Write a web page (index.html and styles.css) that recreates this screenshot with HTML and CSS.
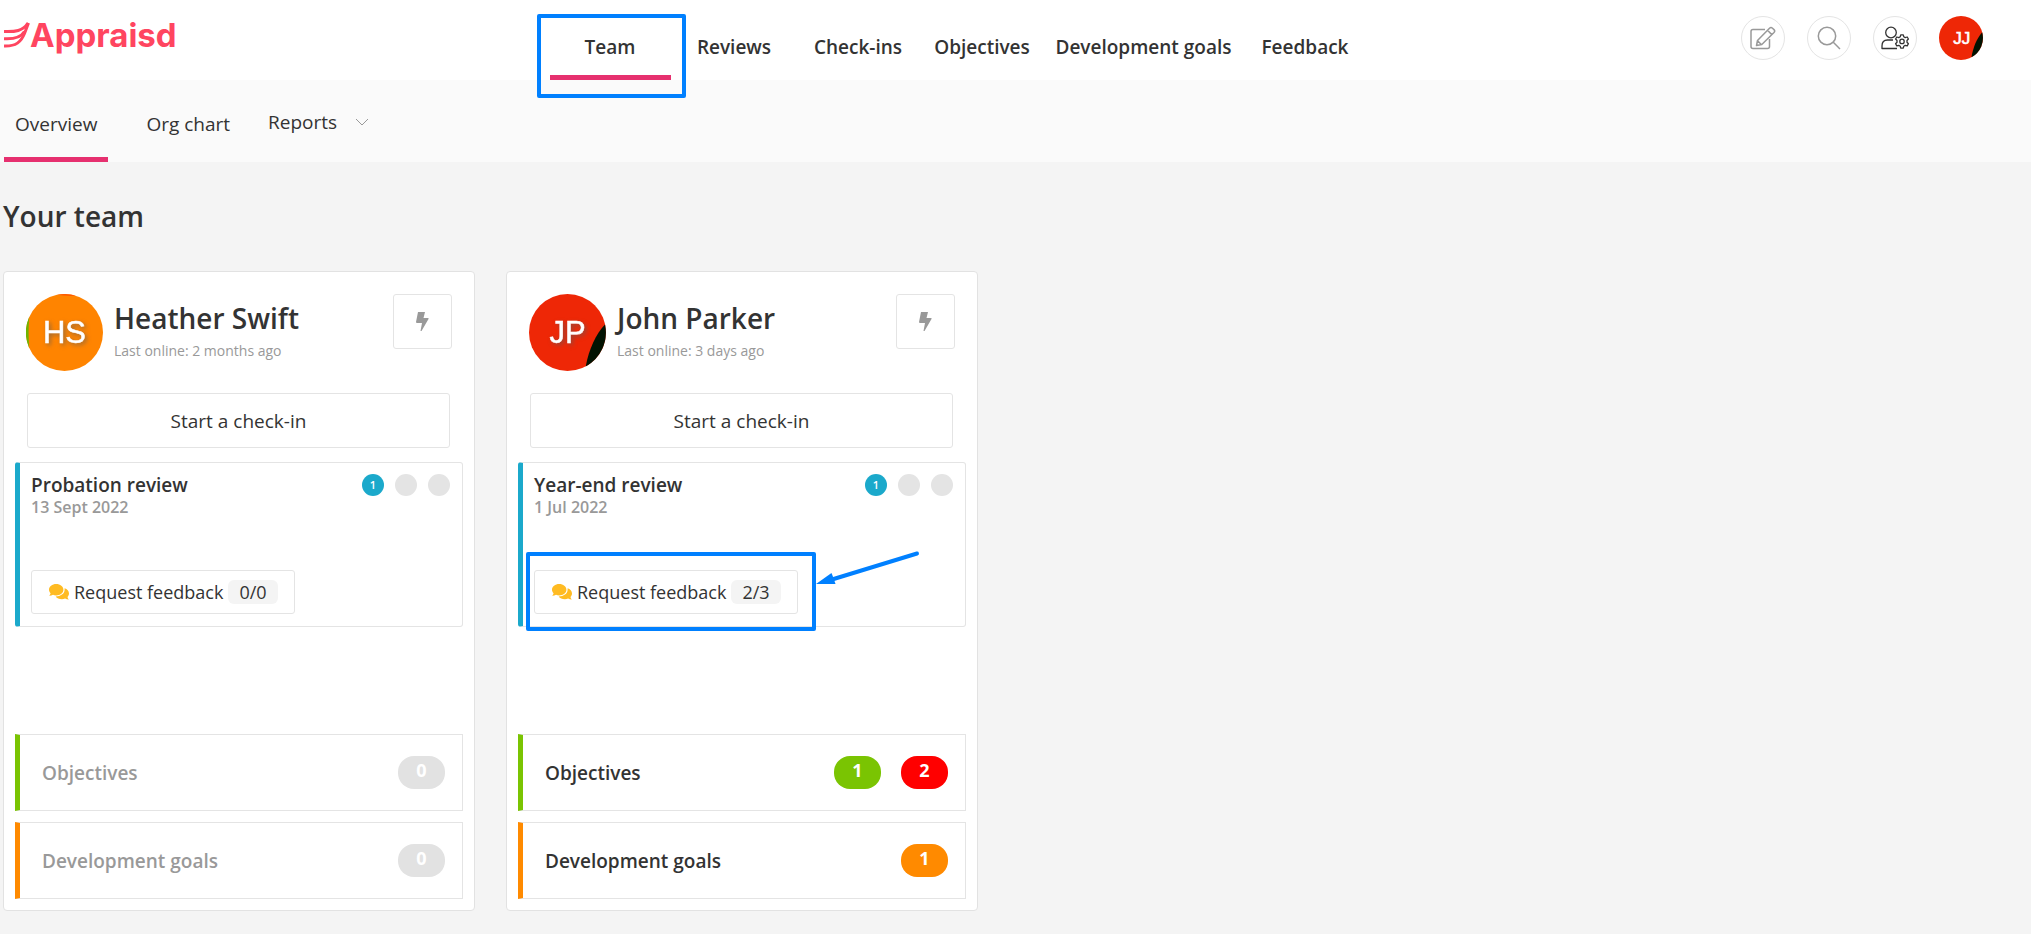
FILE: index.html
```html
<!DOCTYPE html>
<html lang="en">
<head>
  <meta charset="UTF-8">
  <title>Your team - Appraisd</title>
  <meta name="viewport" content="width=device-width, initial-scale=1.0">
  <link rel="stylesheet" href="styles.css">
</head>
<body>

  <!-- ====== Header ====== -->
  <header class="header">
    <a class="logo" href="#">
      <svg class="logo-wing" viewBox="0 0 26 26" aria-hidden="true">
        <path d="M0 9.500C11 10 19 9 24 1"/>
        <path d="M0 16.700C9 17.200 17 15.500 20.500 9.500"/>
        <path d="M0 24C12 24.500 17 20 20.500 11.500L24.500 1"/>
      </svg>
      <span>Appraisd</span>
    </a>

    <nav class="main-nav">
      <a class="nav-link active" href="#team">Team<span class="highlight highlight-nav"></span></a>
      <a class="nav-link" href="#reviews">Reviews</a>
      <a class="nav-link" href="#checkins">Check-ins</a>
      <a class="nav-link" href="#objectives">Objectives</a>
      <a class="nav-link" href="#goals">Development goals</a>
      <a class="nav-link" href="#feedback">Feedback</a>
    </nav>

    <div class="actions">
      <button class="icon-btn" type="button" aria-label="Write">
        <svg width="26" height="24" viewBox="0 0 26 24">
          <path d="M15 3.500H3Q1 3.500 1 5.500V20.500Q1 22.500 3 22.500H17.500Q19.500 22.500 19.500 20.500V13"/>
          <path d="M6.500 19.500L7.500 14.500L19.500 2.200Q21 .8 22.500 2.200L24 3.600Q25.400 5 24 6.500L11.800 18.500ZM17.500 4.300L21.800 8.600M7.800 15L11.300 18.500"/>
        </svg>
      </button>
      <button class="icon-btn" type="button" aria-label="Search">
        <svg width="24" height="24" viewBox="0 0 24 24">
          <circle cx="10" cy="10" r="8.700"/>
          <path d="M16.300 16.300L23 23"/>
        </svg>
      </button>
      <button class="icon-btn dark" type="button" aria-label="Admin">
        <svg width="28" height="24" viewBox="0 0 28 24">
          <circle cx="10" cy="6.500" r="5.300"/>
          <path d="M16 22.500H1V20Q1 14 6.500 14H12"/>
          <path d="M19.700 8.800H22.300L22.800 10.800L24.200 11.600L26.200 11L27.400 13L26 14.500V16.300L27.400 17.800L26.200 19.900L24.200 19.300L22.800 20.200L22.300 22.200H19.700L19.200 20.200L17.800 19.300L15.800 19.900L14.600 17.800L16 16.300V14.500L14.600 13L15.800 11L17.800 11.600L19.200 10.800Z"/>
          <circle cx="21" cy="15.400" r="2.200"/>
        </svg>
      </button>
      <svg class="avatar-small" viewBox="0 0 77 77" role="img" aria-label="JJ">
        <circle cx="38.500" cy="38.500" r="38.500" fill="#ee2706"/>
        <path d="M75.500 28.500A38.500 38.500 0 0 1 56.700 72.400C60 54 66 40 75.500 28.500Z" fill="#021302"/>
        <text x="40" y="49" font-size="30">JJ</text>
      </svg>
    </div>
  </header>

  <!-- ====== Sub navigation ====== -->
  <nav class="sub-nav">
    <a class="sub-link active" href="#overview">Overview</a>
    <a class="sub-link" href="#org">Org chart</a>
    <button class="sub-menu" type="button">Reports
      <svg width="14" height="8" viewBox="0 0 14 8"><path d="M1 1L7 7L13 1"/></svg>
    </button>
  </nav>

  <!-- ====== Team ====== -->
  <main class="content">
    <h1>Your team</h1>

    <div class="cards">
      <article class="card">
        <div class="person">
          <svg class="avatar" viewBox="0 0 77 77" role="img" aria-label="HS">
            <circle cx="38.500" cy="38.500" r="38.500" fill="#ff8400"/>
            <path d="M3.200 23A38.500 38.500 0 0 0 3.200 54Q2 38 3.200 23Z" fill="#6fb400"/>
            <path d="M31 .8A38.500 38.500 0 0 1 50 1.700Q40 2.500 31 .8Z" fill="#ff5a00"/>
            <text x="38.500" y="49">HS</text>
          </svg>
          <div class="person-text">
            <h2>Heather Swift</h2>
            <p>Last online: 2 months ago</p>
          </div>
          <button class="quick-btn" type="button" aria-label="Quick actions">
            <svg width="13" height="19" viewBox="0 0 13 19"><path d="M2 0H9L7.500 6H12Q13 6 12.500 7L5.500 19H4.500L6 11H1Q0 11 0 10Z"/></svg>
          </button>
        </div>

        <button class="checkin-btn" type="button">Start a check-in</button>

        <section class="review">
          <div class="review-top">
            <div>
              <h3>Probation review</h3>
              <p>13 Sept 2022</p>
            </div>
            <div class="steps">
              <span class="step current">1</span>
              <span class="step"></span>
              <span class="step"></span>
            </div>
          </div>
          <div class="feedback">
            <button class="feedback-btn" type="button">
              <svg width="20" height="16" viewBox="0 0 20 16"><path d="M7.200 0C11.200 0 14.400 2.500 14.400 5.700S11.200 11.400 7.200 11.400C6 11.400 4.900 11.200 4 10.800C3 11.400 1.700 11.800.2 11.800C.9 11 1.400 10.100 1.600 9.200C.6 8.200 0 7 0 5.700C0 2.500 3.200 0 7.200 0Z"/><path d="M15.600 4.300C18.200 5.200 20 7.200 20 9.500C20 10.800 19.400 12 18.500 12.900C18.700 13.900 19.200 14.800 19.900 15.600C18.400 15.600 17.100 15.200 16.100 14.600C15.100 15 14 15.200 12.900 15.200C10.200 15.200 7.800 14.100 6.700 12.400C11.500 12.300 15.600 9.800 15.600 5.700Z"/></svg>
              Request feedback
              <span class="count">0/0</span>
            </button>
          </div>
        </section>

        <section class="row row-objectives muted">
          <h3>Objectives</h3>
          <span class="pill">0</span>
        </section>
        <section class="row row-goals muted">
          <h3>Development goals</h3>
          <span class="pill">0</span>
        </section>
      </article>

      <article class="card">
        <div class="person">
          <svg class="avatar" viewBox="0 0 77 77" role="img" aria-label="JP">
            <circle cx="38.500" cy="38.500" r="38.500" fill="#ee2706"/>
            <path d="M76 30.500A38.500 38.500 0 0 1 56.700 72.400C60 55 67 40 76 30.500Z" fill="#021302"/>
            <text x="38.500" y="49">JP</text>
          </svg>
          <div class="person-text">
            <h2>John Parker</h2>
            <p>Last online: 3 days ago</p>
          </div>
          <button class="quick-btn" type="button" aria-label="Quick actions">
            <svg width="13" height="19" viewBox="0 0 13 19"><path d="M2 0H9L7.500 6H12Q13 6 12.500 7L5.500 19H4.500L6 11H1Q0 11 0 10Z"/></svg>
          </button>
        </div>

        <button class="checkin-btn" type="button">Start a check-in</button>

        <section class="review">
          <div class="review-top">
            <div>
              <h3>Year-end review</h3>
              <p>1 Jul 2022</p>
            </div>
            <div class="steps">
              <span class="step current">1</span>
              <span class="step"></span>
              <span class="step"></span>
            </div>
          </div>
          <div class="feedback">
            <button class="feedback-btn" type="button">
              <svg width="20" height="16" viewBox="0 0 20 16"><path d="M7.200 0C11.200 0 14.400 2.500 14.400 5.700S11.200 11.400 7.200 11.400C6 11.400 4.900 11.200 4 10.800C3 11.400 1.700 11.800.2 11.800C.9 11 1.400 10.100 1.600 9.200C.6 8.200 0 7 0 5.700C0 2.500 3.200 0 7.200 0Z"/><path d="M15.600 4.300C18.200 5.200 20 7.200 20 9.500C20 10.800 19.400 12 18.500 12.900C18.700 13.900 19.200 14.800 19.900 15.600C18.400 15.600 17.100 15.200 16.100 14.600C15.100 15 14 15.200 12.900 15.200C10.200 15.200 7.800 14.100 6.700 12.400C11.500 12.300 15.600 9.800 15.600 5.700Z"/></svg>
              Request feedback
              <span class="count">2/3</span>
            </button>
            <span class="highlight highlight-feedback"></span>
            <svg class="arrow" width="104" height="36" viewBox="0 0 104 36" aria-hidden="true">
              <path class="arrow-line" d="M16 29.500L101 3.500"/>
              <path class="arrow-head" d="M0 34L15.500 23L17.500 28L19.500 34Z"/>
            </svg>
          </div>
        </section>

        <section class="row row-objectives">
          <h3>Objectives</h3>
          <span class="pill green">1</span>
          <span class="pill red">2</span>
        </section>
        <section class="row row-goals">
          <h3>Development goals</h3>
          <span class="pill orange">1</span>
        </section>
      </article>
    </div>
  </main>

</body>
</html>
```
FILE: styles.css
```css
/* ====== General Styles ====== */
* {
  box-sizing: border-box;
}

body {
  font-family: "Open Sans", "Noto Sans", sans-serif;
  font-size: 19px;
  margin: 0;
  background: #f4f4f4;
  color: #333;
}

h1, h2, h3, p {
  margin: 0;
}

h1, h2 {
  font-size: 28px;
  line-height: 38px;
  font-weight: 600;
}

h3 {
  font-size: 19px;
  line-height: 22px;
  font-weight: 600;
}

a {
  color: inherit;
  text-decoration: none;
}

button {
  font: inherit;
  color: inherit;
  background: #fff;
  border: 1px solid #e4e4e4;
  border-radius: 3px;
  padding: 0;
  cursor: pointer;
}

/* ====== Header ====== */
.header {
  display: flex;
  justify-content: space-between;
  align-items: flex-start;
  height: 80px;
  padding: 0 48px 0 4px;
  background: #fff;
}

.logo {
  display: flex;
  width: 170px;
  padding-top: 15px;
  font-family: Inter, sans-serif;
  font-size: 33px;
  line-height: 40px;
  font-weight: 700;
  color: #ff4560;
}

.logo-wing {
  flex: none;
  width: 26px;
  height: 26px;
  margin-top: 7px;
  fill: none;
  stroke: #ff4560;
  stroke-width: 3;
}

.main-nav {
  display: flex;
  gap: 3px;
}

.nav-link {
  position: relative;
  min-width: 121px;
  height: 80px;
  padding: 34px 10px 0;
  line-height: 26px;
  font-weight: 600;
  text-align: center;
  border-bottom: 5px solid transparent;
}

.nav-link.active,
.sub-link.active {
  border-bottom-color: #e6306f;
}

.actions {
  display: flex;
  gap: 22px;
  padding-top: 16px;
}

.icon-btn {
  display: flex;
  align-items: center;
  justify-content: center;
  width: 44px;
  height: 44px;
  border-radius: 50%;
}

.icon-btn svg {
  fill: none;
  stroke: #999;
  stroke-width: 1.5;
  stroke-linejoin: round;
}

.icon-btn.dark svg {
  stroke: #333;
  stroke-width: 1.3;
}

.avatar,
.avatar-small {
  flex: none;
  width: 77px;
  height: 77px;
  font-family: "Liberation Sans", Arial, sans-serif;
  font-size: 31px;
  text-anchor: middle;
  fill: #fff;
  stroke-width: 0;
}

.avatar text {
  stroke: #fff;
  stroke-width: 0.5;
  filter: drop-shadow(2px 2px 2px rgba(90, 90, 90, 0.6));
}

.avatar-small {
  width: 44px;
  height: 44px;
}

.avatar-small text {
  stroke: #fff;
  stroke-width: 1;
}

/* ====== Sub navigation ====== */
.sub-nav {
  display: flex;
  gap: 27px;
  height: 82px;
  padding-left: 4px;
  background: #fafafa;
}

.sub-link {
  padding: 31px 11px 0;
  line-height: 26px;
  border-bottom: 5px solid transparent;
}

.sub-menu {
  display: flex;
  align-items: center;
  gap: 18px;
  height: 26px;
  margin-top: 29px;
  border: none;
  background: none;
}

.sub-menu svg {
  fill: none;
  stroke: #999;
}

/* ====== Team cards ====== */
.content {
  padding: 35px 3px 23px;
}

.cards {
  display: flex;
  flex-wrap: wrap;
  gap: 31px;
  margin-top: 36px;
}

.card {
  display: flex;
  flex-direction: column;
  width: 472px;
  min-height: 640px;
  padding: 11px;
  background: #fff;
  border: 1px solid #e2e2e2;
  border-radius: 4px;
}

.person {
  display: flex;
  align-items: flex-start;
  gap: 11px;
  padding: 11px 11px 0;
}

.person-text {
  flex: 1;
  padding-top: 5px;
}

.person-text p {
  font-size: 14px;
  line-height: 28px;
  color: #999;
}

.quick-btn {
  display: flex;
  align-items: center;
  justify-content: center;
  width: 59px;
  height: 55px;
}

.quick-btn svg {
  fill: #999;
}

.checkin-btn {
  height: 55px;
  margin: 22px 13px 14px 12px;
}

/* ====== Review box ====== */
.review {
  height: 165px;
  padding: 11px 12px 12px 11px;
  border: 1px solid #e4e4e4;
  border-left: 5px solid #1ba9cb;
  border-radius: 3px;
  display: flex;
  flex-direction: column;
  justify-content: space-between;
}

.review-top {
  display: flex;
  justify-content: space-between;
}

.review-top p {
  font-size: 16px;
  line-height: 22px;
  font-weight: 600;
  color: #999;
}

.steps {
  display: flex;
  gap: 11px;
}

.step {
  width: 22px;
  height: 22px;
  border-radius: 50%;
  background: #e4e4e4;
  color: #fff;
  font-size: 11px;
  line-height: 22px;
  font-weight: 600;
  text-align: center;
}

.step.current {
  background: #1ba9cb;
}

.feedback {
  position: relative;
}

.feedback-btn {
  display: flex;
  align-items: center;
  gap: 5px;
  height: 44px;
  padding: 0 16px 0 17px;
  font-size: 18px;
}

.feedback-btn svg {
  fill: #ffbb22;
}

.count {
  padding: 0 11px;
  line-height: 24px;
  border-radius: 6px;
  background: #f4f4f4;
}

/* ====== Summary rows ====== */
.row {
  display: flex;
  align-items: center;
  gap: 20px;
  height: 77px;
  margin-top: 11px;
  padding: 0 17px 0 22px;
  border: 1px solid #e4e4e4;
  border-left-width: 5px;
}

.row h3 {
  flex: 1;
}

.row-objectives {
  margin-top: auto;
  border-left-color: #7ac402;
}

.row-goals {
  border-left-color: #ff8a00;
}

.row.muted h3 {
  color: #999;
}

.pill {
  width: 47px;
  height: 33px;
  border-radius: 16px;
  background: #e2e2e2;
  color: #fff;
  font-size: 18px;
  line-height: 29px;
  font-weight: 700;
  text-align: center;
}

.pill.green {
  background: #7ac402;
}

.pill.red {
  background: #f00;
}

.pill.orange {
  background: #ff8a00;
}

/* ====== Highlights over the page ====== */
.highlight {
  position: absolute;
  border: 4px solid #0080ff;
  border-radius: 2px;
  pointer-events: none;
}

.highlight-nav {
  top: 14px;
  right: -15px;
  left: -13px;
  height: 84px;
}

.highlight-feedback {
  top: -18px;
  left: -8px;
  width: 290px;
  height: 79px;
}

.arrow {
  position: absolute;
  top: -20px;
  left: 282px;
}

.arrow-line {
  stroke: #0080ff;
  stroke-width: 4;
  stroke-linecap: round;
}

.arrow-head {
  fill: #0080ff;
}
```
